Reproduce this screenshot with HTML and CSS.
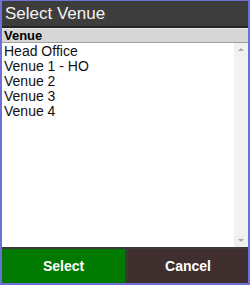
FILE: index.html
```html
<!DOCTYPE html>
<html lang="en">
<head>
  <meta charset="UTF-8" />
  <title>Select Venue</title>
  <link rel="stylesheet" href="styles.css">
</head>
<body>
  <div class="dialog">
    <div class="title">Select Venue</div>
    <div class="list">
      <div class="list-head">Venue</div>
      <div class="list-body">
        <div class="rows">
          <div class="row">Head Office</div>
          <div class="row">Venue 1 - HO</div>
          <div class="row">Venue 2</div>
          <div class="row">Venue 3</div>
          <div class="row">Venue 4</div>
        </div>
        <div class="scrollbar">
          <div class="arrow up"></div>
          <div class="track"></div>
          <div class="arrow down"></div>
        </div>
      </div>
    </div>
    <div class="buttons">
      <button class="btn select">Select</button>
      <button class="btn cancel">Cancel</button>
    </div>
  </div>
</body>
</html>
```

FILE: styles.css
```css
html, body {
  margin: 0;
  padding: 0;
}
body {
  width: 250px;
  height: 285px;
  font-family: 'Liberation Sans', Arial, sans-serif;
}
.dialog {
  box-sizing: border-box;
  width: 250px;
  height: 285px;
  border: 2px solid #6f6fd8;
  border-top-width: 1px;
  display: flex;
  flex-direction: column;
  background: #3a3a3a;
}
.title {
  height: 25px;
  line-height: 25px;
  padding-left: 3px;
  color: #f4f4f4;
  font-size: 17px;
  background: #3d3d3d;
  border-bottom: 2px solid #262626;
}
.list {
  flex: 1;
  display: flex;
  flex-direction: column;
  background: #fff;
  border-bottom: 2px solid #3a3a3a;
}
.list-head {
  height: 13px;
  line-height: 13px;
  padding-left: 2px;
  font-size: 13px;
  font-weight: bold;
  background: #d6d6d6;
  border-top: 1px solid #e8e8e8;
  border-bottom: 1px solid #a0a0a0;
}
.list-body {
  flex: 1;
  display: flex;
}
.rows {
  flex: 1;
  padding-top: 1px;
}
.row {
  height: 15px;
  line-height: 15px;
  padding-left: 2px;
  font-size: 14px;
  color: #111;
}
.scrollbar {
  width: 14px;
  display: flex;
  flex-direction: column;
  background: #f3f3f3;
}
.track {
  flex: 1;
}
.arrow {
  height: 14px;
  position: relative;
  background: #f0f0f0;
}
.arrow::after {
  content: '';
  position: absolute;
  left: 4px;
  width: 0;
  height: 0;
  border-left: 3px solid transparent;
  border-right: 3px solid transparent;
}
.up::after {
  top: 5px;
  border-bottom: 3px solid #a8a8a8;
}
.down::after {
  top: 6px;
  border-top: 3px solid #a8a8a8;
}
.buttons {
  height: 34px;
  display: flex;
  gap: 3px;
  background: #3a3a3a;
}
.btn {
  border: none;
  margin: 0;
  font-family: inherit;
  font-size: 14px;
  font-weight: bold;
  color: #fff;
  padding: 0;
}
.select {
  width: 123px;
  background: #007a00;
}
.cancel {
  flex: 1;
  background: #3f2f2f;
}
```
